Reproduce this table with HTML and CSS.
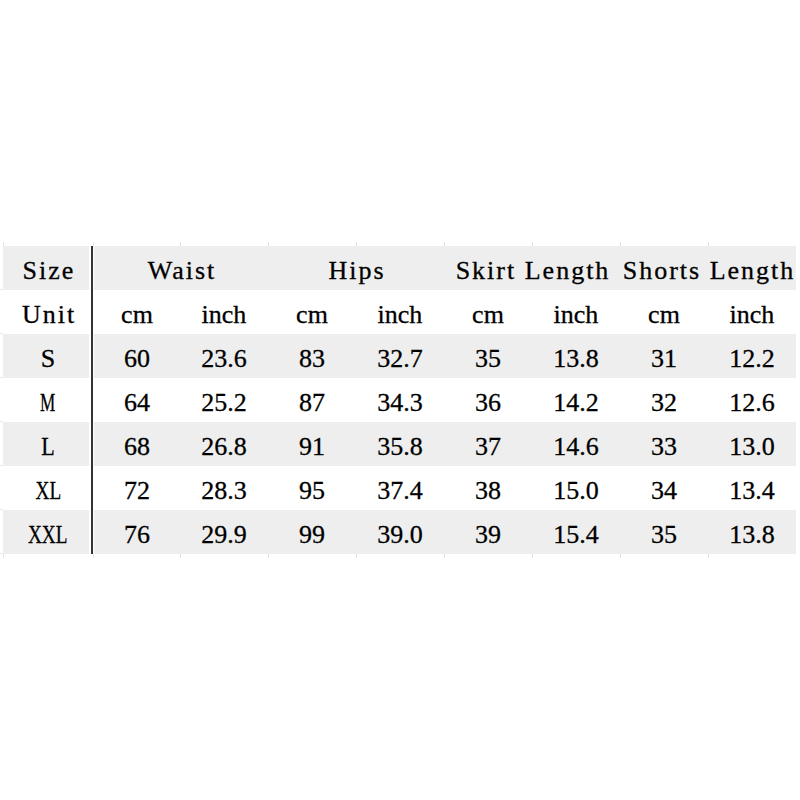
FILE: index.html
```html
<!DOCTYPE html>
<html>
<head>
<meta charset="utf-8">
<link rel="stylesheet" href="styles.css">
</head>
<body>
<div class="sheet">
  <div class="ticks"><span></span><span></span><span></span><span></span><span></span><span></span><span></span><span></span><span></span><span class="last"></span></div>
  <div class="row g">
    <div class="gut"></div>
    <div class="c size w">Size</div>
    <div class="c c2 span2 w">Waist</div>
    <div class="c span2 w">Hips</div>
    <div class="c span2 w">Skirt Length</div>
    <div class="c span2 w">Shorts Length</div>
  </div>
  <div class="row">
    <div class="gut"></div>
    <div class="c size w">Unit</div>
    <div class="c c2">cm</div><div class="c">inch</div>
    <div class="c">cm</div><div class="c">inch</div>
    <div class="c">cm</div><div class="c">inch</div>
    <div class="c">cm</div><div class="c">inch</div>
  </div>
  <div class="row g">
    <div class="gut"></div>
    <div class="c size">S</div>
    <div class="c c2">60</div><div class="c">23.6</div>
    <div class="c">83</div><div class="c">32.7</div>
    <div class="c">35</div><div class="c">13.8</div>
    <div class="c">31</div><div class="c">12.2</div>
  </div>
  <div class="row">
    <div class="gut"></div>
    <div class="c size"><span class="sq m">M</span></div>
    <div class="c c2">64</div><div class="c">25.2</div>
    <div class="c">87</div><div class="c">34.3</div>
    <div class="c">36</div><div class="c">14.2</div>
    <div class="c">32</div><div class="c">12.6</div>
  </div>
  <div class="row g">
    <div class="gut"></div>
    <div class="c size"><span class="sq l">L</span></div>
    <div class="c c2">68</div><div class="c">26.8</div>
    <div class="c">91</div><div class="c">35.8</div>
    <div class="c">37</div><div class="c">14.6</div>
    <div class="c">33</div><div class="c">13.0</div>
  </div>
  <div class="row">
    <div class="gut"></div>
    <div class="c size"><span class="sq">XL</span></div>
    <div class="c c2">72</div><div class="c">28.3</div>
    <div class="c">95</div><div class="c">37.4</div>
    <div class="c">38</div><div class="c">15.0</div>
    <div class="c">34</div><div class="c">13.4</div>
  </div>
  <div class="row g">
    <div class="gut"></div>
    <div class="c size"><span class="sq">XXL</span></div>
    <div class="c c2">76</div><div class="c">29.9</div>
    <div class="c">99</div><div class="c">39.0</div>
    <div class="c">39</div><div class="c">15.4</div>
    <div class="c">35</div><div class="c">13.8</div>
  </div>
  <div class="ticks"><span></span><span></span><span></span><span></span><span></span><span></span><span></span><span></span><span></span><span class="last"></span></div>
</div>
</body>
</html>
```

FILE: styles.css
```css
html, body {
  margin: 0;
  background: #ffffff;
}
body {
  font-family: "Liberation Serif", "Times New Roman", serif;
  color: #000000;
}
.sheet {
  padding-top: 242px;
}
.row, .ticks {
  display: grid;
  grid-template-columns: 3px 90px 87px repeat(7, 88px);
}
.ticks {
  height: 4px;
}
.ticks span {
  border-left: 1px solid #e3e3e3;
}
.ticks span:first-child {
  border-left: none;
}
.ticks span.last {
  width: 0;
}
.row {
  height: 44px;
}
.gut {
  box-sizing: border-box;
  border-bottom: 1px solid #ebebeb;
}
.c {
  box-sizing: border-box;
  height: 44px;
  padding-top: 5px;
  line-height: 39px;
  font-size: 26px;
  text-align: center;
  white-space: nowrap;
  -webkit-text-stroke: 0.3px #000000;
}
.g .c {
  background: #eeeeee;
}
.size {
  padding-left: 4px;
  padding-right: 2px;
  border-right: 2px solid #333333;
}
.g .size {
  background: linear-gradient(to right, #eeeeee calc(100% - 2px), #ffffff calc(100% - 2px));
}
.c2 {
  border-left: 1px solid #ffffff;
}
.span2 {
  grid-column: span 2;
}
.w {
  letter-spacing: 2px;
  text-indent: 2px;
}
.sq {
  display: inline-block;
  transform: scaleX(0.74);
}
.sq.m {
  transform: scaleX(0.66);
}
.sq.l {
  transform: scaleX(0.85);
}
```
